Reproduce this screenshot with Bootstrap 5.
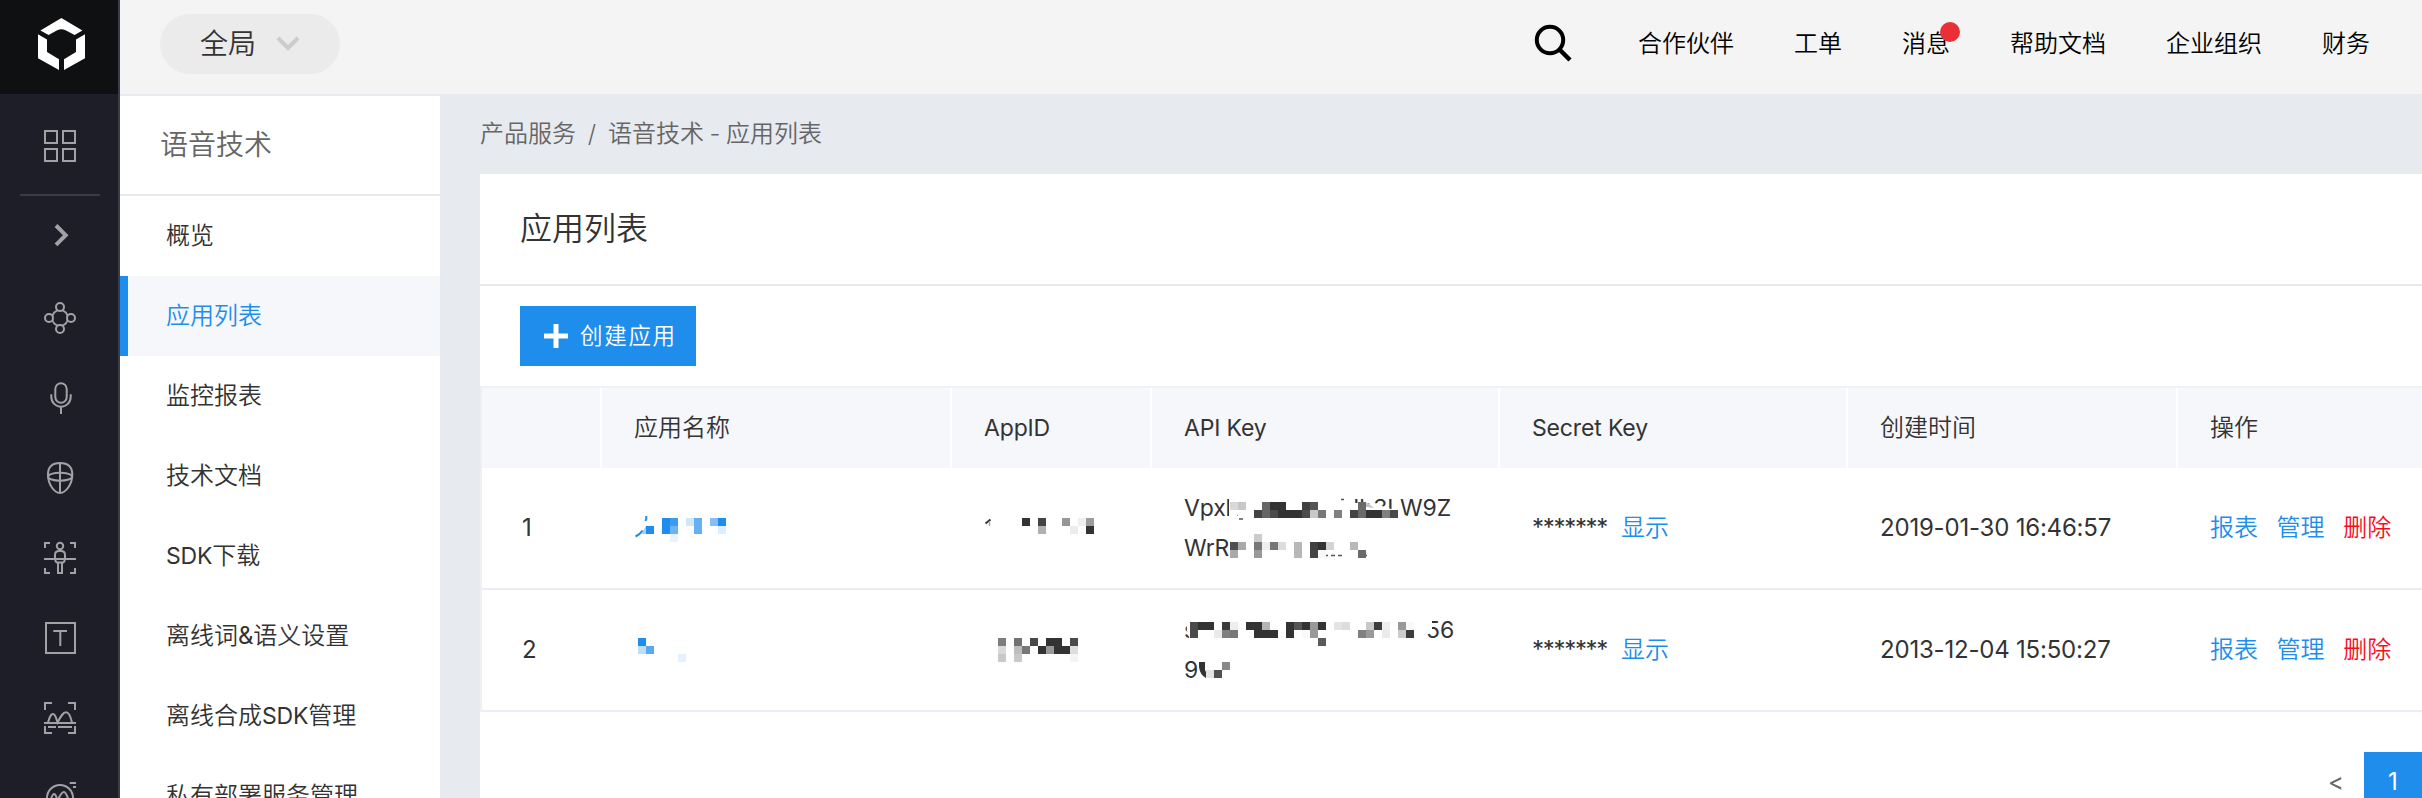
<!DOCTYPE html>
<html lang="zh-CN">
<head>
<meta charset="utf-8">
<title>语音技术 - 应用列表</title>
<meta name="viewport" content="width=device-width, initial-scale=1">
<link href="https://cdn.jsdelivr.net/npm/bootstrap@5.3.0/dist/css/bootstrap.min.css" rel="stylesheet">
<style>
  :root { --blue: #1f8dec; --line: #e7ebf0; --ink: #333; }
  body { height: 798px; overflow: hidden; background: #e7ebf0; color: var(--ink);
    font: 400 24px/40px Inter, "Noto Sans CJK SC", sans-serif; font-weight: 350; }
  a { color: inherit; text-decoration: none; }
  .lat, .apps th.lat { font-size: 23px; letter-spacing: -.15px; font-weight: 400; }
  .num { font-size: 24px; letter-spacing: -.2px; font-weight: 400; }

  .rail { width: 120px; height: 798px; background: #1e1e28; border-right: 2px solid #3b3b4c; overflow: hidden; }
  .rail-logo { height: 94px; background: #0f1011; }
  .rail-home { height: 100px; padding: 36px 0 0 44px; }
  .rail-rule { width: 80px; height: 2px; margin-left: 20px; background: #3b3b4c; }
  .rail-item { height: 80px; padding: 26px 0 0 44px; }
  .rail svg { display: block; fill: none; stroke: #a2a2a6; stroke-width: 2; overflow: visible; }
  .rail .rail-logo svg { fill: #fff; stroke: none; }
  .solid-bg { fill: #1e1e28; }

  .topbar { height: 94px; background: #f4f4f4; padding: 0 52px 0 40px; color: #000; }
  .scope { width: 180px; height: 60px; margin-bottom: 6px; padding: 0 40px; border-radius: 30px; background: #ebebeb; color: #333; font-size: 28px; }
  .topnav { gap: 60px; margin-bottom: 6px; }
  .dot { position: absolute; width: 20px; height: 20px; border-radius: 50%; background: #e93036; right: -10px; top: -2px; }

  .sidebar { width: 320px; height: 702px; margin-top: 2px; background: #fff; overflow: hidden; }
  .side-title { height: 100px; padding-left: 40px; border-bottom: 2px solid var(--line); font-size: 28px; color: #666; }
  .side-link { height: 80px; padding-left: 46px; }
  .side-link.active { background: #f5f7fb; color: var(--blue); border-left: 8px solid var(--blue); padding-left: 38px; }

  .content { margin-left: 40px; min-width: 0; }
  .crumbs { height: 80px; color: #666; }
  .panel { height: 624px; background: #fff; }
  .panel-title { height: 112px; padding-left: 40px; border-bottom: 2px solid var(--line); font-size: 32px; }
  .toolbar { height: 100px; padding-left: 40px; }
  .create { width: 176px; height: 60px; padding: 0 0 0 24px; gap: 12px; background: var(--blue); color: #fff; font-size: 22.5px; letter-spacing: 1.7px; font-weight: 350; }

  .apps { width: 100%; table-layout: fixed; border-collapse: separate; border-spacing: 0; border-top: 2px solid #eff1f2; border-left: 2px solid #efefef; }
  .apps th { height: 80px; padding: 0 0 0 32px; font-weight: 350; background: #f5f7fb; border-right: 2px solid #fff; }
  .apps th:last-child { border-right: 0; }
  .apps td { height: 122px; padding: 0 0 0 32px; border-bottom: 2px solid #e9edf6; position: relative; }
  .apps td:first-child { padding-left: 40px; }
  .go { color: var(--blue); }
  .del { color: #fb0a1c; }
  .ops { gap: 18.6px; }
  .stars { display: inline-block; width: 89px; letter-spacing: -1.3px; }
  /* blurred-out cells: the mosaic lies over whatever text is left */
  .mosaic { position: absolute; left: 32px; top: 20px; overflow: visible; }
  .key-line { width: 267px; height: 40px; }
  .key-line.wide { width: 270px; }

  .pager { padding-top: 40px; height: 100px; }
  .page-prev { width: 40px; height: 60px; color: #666; padding-left: 4px; }
  .page-now { width: 58px; height: 60px; background: var(--blue); color: #fff; padding-left: 24px; }
</style>
</head>
<body>
<div class="d-flex">
  <nav class="rail flex-shrink-0">
    <div class="rail-logo">
      <svg width="118" height="94" viewBox="0 0 118 94"><path d="M40.4 30.4 61.4 18l21 12.4-7.8 4.7-9-4.8q-4.2-2-8.4 0l-8.6 4.7zM38 34.3l9 5.2V52l12 7.3V70L38 58.3zM85 34.3l-9 5.2V52l-12 7.3V70l21-11.7z"/></svg>
    </div>
    <div class="rail-home">
      <svg width="32" height="32"><path d="M1 1h12v12H1zM19 1h12v12H19zM1 19h12v12H1zM19 19h12v12H19z"/></svg>
    </div>
    <div class="rail-rule"></div>
    <div class="rail-item"><svg width="32" height="32"><path stroke-width="4" d="m12 3.500 9.700 9.700-9.700 9.700"/></svg></div>
    <div class="rail-item"><svg width="32" height="32"><circle cx="16" cy="16" r="8"/><g class="solid-bg"><circle cx="16" cy="5" r="4"/><circle cx="5" cy="16" r="4"/><circle cx="27" cy="16" r="4"/><circle cx="16" cy="27" r="4"/></g></svg></div>
    <div class="rail-item"><svg width="32" height="32"><rect x="11.300" y="1.200" width="11.400" height="19.600" rx="5.700"/><path d="M7.300 12.300V15a9.700 9.700 0 0 0 19.400 0v-2.700M17 25v7"/></svg></div>
    <div class="rail-item"><svg width="32" height="32"><path d="M16 1c8 0 12.300 4 12.300 11.500C28.300 22 22 31 16 31S4 22 4 12.500C4 5 8 1 16 1zM16 1v30"/><ellipse cx="16.100" cy="14.700" rx="12" ry="4"/></svg></div>
    <div class="rail-item"><svg width="32" height="32"><path d="M1 6V1h5M26 1h5v5M1 26v5h5M26 31h5v-5M0 17h32M13 20.500q-2-1-2-4V13q0-4 4-4h2q4 0 4 4v3.500q0 3-2 4zM14 21v10h4V21"/><circle cx="16" cy="4" r="3.200"/></svg></div>
    <div class="rail-item"><svg width="32" height="32"><path d="M2 1h29v30H2zM9.300 9H23M16.300 9v15"/></svg></div>
    <div class="rail-item"><svg width="32" height="32"><path d="M1 8V1h7M24 1h7v7M1 24v7h7M24 31h7v-7M0 21h32M4 25h8M14 25h14M4 20.500C6 14 7 12 9 12c2.500 0 3 4 4.500 8.500C17 14 19 10.300 22 10.300S26.500 14 28 20.500"/></svg></div>
    <div class="rail-item"><svg width="32" height="32"><circle cx="16" cy="16" r="13"/><path d="M25.700 1H32M29 5h3M6 20c2-7 3-8 4-8 2 0 2.500 3 3.500 7C16 13 18 10 20 10s3 4 5 9"/></svg></div>
  </nav>

  <div class="flex-grow-1" style="min-width:0">
    <header class="topbar d-flex align-items-center justify-content-between">
      <div class="scope d-flex align-items-center justify-content-between">全局
        <svg width="24" height="18" fill="none" stroke="#ccc" stroke-width="4"><path d="m2 3 10 10L22 3"/></svg>
      </div>
      <nav class="topnav d-flex align-items-center">
        <svg class="me-1" width="40" height="40" fill="none" stroke="#000"><circle cx="16" cy="16" r="13.200" stroke-width="4"/><path stroke-width="4.500" d="m25 25 11 11"/></svg>
        <a href="#">合作伙伴</a><a href="#">工单</a>
        <a href="#" class="position-relative">消息<span class="dot"></span></a>
        <a href="#">帮助文档</a><a href="#">企业组织</a><a href="#">财务</a>
      </nav>
    </header>

    <div class="d-flex">
      <aside class="sidebar flex-shrink-0">
        <div class="side-title d-flex align-items-center">语音技术</div>
        <a href="#" class="side-link d-flex align-items-center">概览</a>
        <a href="#" class="side-link d-flex align-items-center active">应用列表</a>
        <a href="#" class="side-link d-flex align-items-center">监控报表</a>
        <a href="#" class="side-link d-flex align-items-center">技术文档</a>
        <a href="#" class="side-link d-flex align-items-center"><span class="lat">SDK</span>下载</a>
        <a href="#" class="side-link d-flex align-items-center">离线词<span class="num">&amp;</span>语义设置</a>
        <a href="#" class="side-link d-flex align-items-center">离线合成<span class="lat">SDK</span>管理</a>
        <a href="#" class="side-link d-flex align-items-center">私有部署服务管理</a>
      </aside>

      <main class="content flex-grow-1">
        <div class="crumbs d-flex align-items-center">产品服务<span class="text-center" style="width:32px">/</span>语音技术<span class="text-center" style="width:22px">-</span>应用列表</div>
        <section class="panel">
          <div class="panel-title d-flex align-items-center">应用列表</div>
          <div class="toolbar d-flex align-items-center">
            <button class="create btn rounded-0 border-0 d-flex align-items-center" type="button">
              <svg width="24" height="24" stroke="#fff" stroke-width="5"><path d="M12 0v24M0 12h24"/></svg>创建应用
            </button>
          </div>
          <table class="apps">
            <colgroup><col style="width:120px"><col style="width:350px"><col style="width:200px"><col style="width:348px"><col style="width:348px"><col style="width:330px"><col></colgroup>
            <thead><tr><th></th><th>应用名称</th><th class="lat">AppID</th><th class="lat">API Key</th><th class="lat">Secret Key</th><th>创建时间</th><th>操作</th></tr></thead>
            <tbody>
              <tr>
                <td class="num">1</td>
                <td><svg class="mosaic" width="270" height="80" data-ox="634" data-oy="488" data-cells="518:662#1f8dec,670#3d9bef,686#d0e6fb,694#65b0f2,710#84bff5,718#1f8dec;526:646#1f8dec,662#1f8dec,670#6ab4f4,694#65b0f2,718#ddeefc;534:670#e8f3fe"><path d="m7 46 5-8v8z" fill="#a5d1f8"/><path d="M12.300 28v3l-1 2M8.500 42.500q-2.500 4-7 6" fill="none" stroke="#1f8dec" stroke-width="2"/></svg></td>
                <td><svg class="mosaic" width="160" height="80" data-ox="984" data-oy="488" data-cells="518:1022#333,1038#444,1062#969696,1078#efefef,1086#9d9d9d;526:1038#b0b0b0,1070#ececec,1086#333"><path d="m1.500 35.500 5-4" stroke="#333" stroke-width="2"/><path d="M5.500 33v5" stroke="#aaa" stroke-width="1.500"/></svg></td>
                <td class="lat">
                  <div class="key-line d-flex justify-content-between"><span>Vpxk</span><span>Jb3LW9Z</span></div>
                  <div class="key-line">WrR</div>
                  <svg class="mosaic" width="300" height="80" data-ox="1184" data-oy="488" data-cells="502:1230#d9d9d9,1238#c8c8c8,1262#666,1270#333,1278#333,1302#404040,1310#555,1358#6a6a6a;510:1254#444,1262#666,1270#4b4b4b,1278#333,1286#333,1294#333,1302#4b4b4b,1310#c8c8c8,1318#777,1334#808080,1350#444,1358#6a6a6a,1366#333,1374#333,1382#808080,1390#484848;534:1254#ccc;542:1230#505050,1238#aaa,1254#777,1262#eee,1270#777,1278#ddd,1294#b8b8b8,1310#404040,1318#333,1326#d4d4d4,1350#b8b8b8;550:1230#aaa,1254#999,1294#b8b8b8,1310#444,1318#f8f8f8,1358#6a6a6a"><path fill="#fff" d="M45 5h8v26h-8zM155 15h22l18 2 15 5 20 9v3h-75z"/><path d="m174 14 10 1 6 5-8-1z" fill="#c4c4c4"/><path d="M55 31h4M157 11.500h3M132 67.500h7M141 67.500h3M147 67.500h4M154 67.500h4M174 67.500h9" stroke="#555" stroke-width="1.500"/></svg>
                </td>
                <td><span class="num stars">*******</span><a href="#" class="go">显示</a></td>
                <td class="num">2019-01-30 16:46:57</td>
                <td><div class="ops d-flex"><a href="#" class="go">报表</a><a href="#" class="go">管理</a><a href="#" class="del">删除</a></div></td>
              </tr>
              <tr>
                <td class="num">2</td>
                <td><svg class="mosaic" width="270" height="80" data-ox="634" data-oy="610" data-cells="638:638#1f8dec;646:638#bfdef9,646#59aaf1;654:678#e5f1fe"></svg></td>
                <td><svg class="mosaic" width="160" height="80" data-ox="984" data-oy="610" data-cells="638:998#7e7e7e,1014#727272,1030#484848,1046#333,1054#333,1070#4a4a4a;646:998#d9d9d9,1014#bdbdbd,1022#777,1038#333,1046#999,1054#333,1062#333,1070#ddd;654:998#c9c9c9,1014#c9c9c9,1070#f4f4f4"></svg></td>
                <td class="lat">
                  <div class="key-line wide d-flex justify-content-between"><span>s</span><span>56</span></div>
                  <div class="key-line">9</div>
                  <svg class="mosaic" width="300" height="80" data-ox="1184" data-oy="610" data-cells="622:1190#4a4a4a,1198#333,1206#333,1222#3a3a3a,1230#eee,1246#333,1254#333,1262#b4b4b4,1286#333,1294#555,1302#333,1310#999,1318#333,1334#e4e4e4,1342#dcdcdc,1366#c8c8c8,1374#3c3c3c,1382#eee,1398#999,1406#f8f8f8;630:1190#4a4a4a,1214#eaeaea,1222#808080,1230#777,1254#333,1262#333,1270#333,1286#333,1302#fafafa,1310#999,1358#808080,1366#999,1382#eaeaea,1398#ccc,1406#3c3c3c;638:1318#5a5a5a;662:1222#888;670:1206#e4e4e4,1214#505050"><path fill="#fff" d="M2 6h14v24H6l-3-9zM238 8h10v14l-4 2h-6z"/><path d="M15 52h6v8l3 6-2 2q-6-3-7-11z" fill="#333"/></svg>
                </td>
                <td><span class="num stars">*******</span><a href="#" class="go">显示</a></td>
                <td class="num">2013-12-04 15:50:27</td>
                <td><div class="ops d-flex"><a href="#" class="go">报表</a><a href="#" class="go">管理</a><a href="#" class="del">删除</a></div></td>
              </tr>
            </tbody>
          </table>
          <div class="pager d-flex justify-content-end num">
            <a href="#" class="page-prev d-flex align-items-center">&lt;</a>
            <a href="#" class="page-now d-flex align-items-center">1</a>
          </div>
        </section>
      </main>
    </div>
  </div>
</div>
<script src="https://cdn.jsdelivr.net/npm/bootstrap@5.3.0/dist/js/bootstrap.bundle.min.js"></script>
<script>
  // data-cells is "rowY:x#colour,x#colour;rowY:..." in 8px tiles
  document.querySelectorAll('.mosaic').forEach(svg => {
    const ox = +svg.dataset.ox, oy = +svg.dataset.oy;
    svg.dataset.cells.split(';').forEach(row => {
      const [y, tiles] = row.split(':');
      tiles.split(',').forEach(t => {
        const [x, c] = t.split('#');
        const r = document.createElementNS('http://www.w3.org/2000/svg', 'rect');
        r.setAttribute('x', x - ox); r.setAttribute('y', y - oy);
        r.setAttribute('width', 8); r.setAttribute('height', 8);
        r.setAttribute('fill', '#' + c);
        svg.appendChild(r);
      });
    });
  });
</script>
</body>
</html>
